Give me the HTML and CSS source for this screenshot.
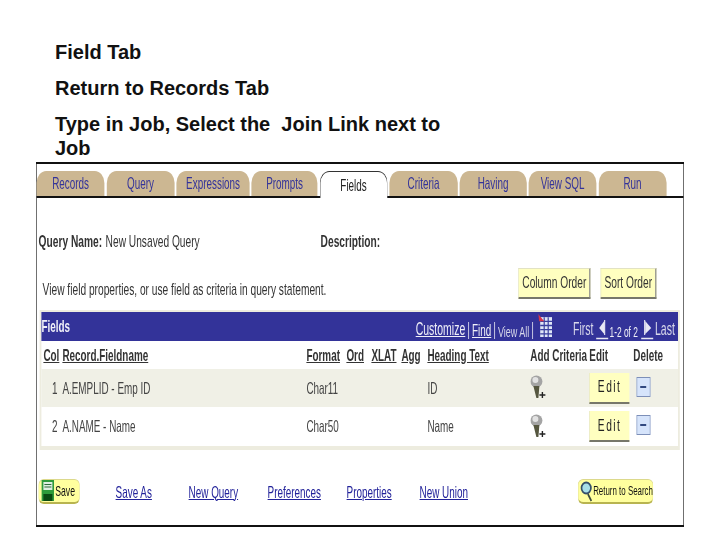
FILE: index.html
```html
<!DOCTYPE html>
<html lang="en">
<head>
<meta charset="utf-8">
<title>Field Tab</title>
<link rel="stylesheet" href="styles.css">
</head>
<body>
<main class="slide">
  <section class="notes">
    <p>Field Tab</p>
    <p>Return to Records Tab</p>
    <p>Type in Job, Select the &nbsp;Join Link next to<br>Job</p>
  </section>
  <section class="frame">
    <nav class="tabs">
      <a class="tab">Records</a>
      <a class="tab">Query</a>
      <a class="tab tab-wide">Expressions</a>
      <a class="tab tab-slim">Prompts</a>
      <a class="tab active">Fields</a>
      <a class="tab">Criteria</a>
      <a class="tab tab-mid">Having</a>
      <a class="tab">View SQL</a>
      <a class="tab">Run</a>
    </nav>
    <div class="query-row">
      <span class="label label-name">Query Name:</span>
      <span class="query-value">New Unsaved Query</span>
      <span class="label">Description:</span>
    </div>
    <div class="hint-row">
      <span class="hint">View field properties, or use field as criteria in query statement.</span>
      <button class="order-btn column-order">Column Order</button>
      <button class="order-btn sort-order">Sort Order</button>
    </div>
    <div class="grid-box">
      <div class="grid-title">
        <span class="grid-name">Fields</span>
        <span class="grid-tools">
          <a class="tool-link customize">Customize</a><span class="sep">|</span><a class="tool-link find">Find</a><span class="sep">|</span><span class="tool-plain">View All</span><span class="sep">|</span>
          <svg class="grid-icon" viewBox="0 0 14 22" preserveAspectRatio="none"><rect x="2" y="3" width="12" height="19" fill="#dfe6f7"/><path d="M2 7h12M2 11h12M2 15h12M2 19h12M6 3v19M10 3v19" stroke="#3a3f9e" stroke-width="1.2"/><path d="M0 0l6 7H1z" fill="#d8344a"/></svg>
          <span class="first">First</span>
          <svg class="nav-icon" viewBox="0 0 14 21" preserveAspectRatio="none"><path d="M9 2v13L4 9z" fill="#e8e8f4"/><path d="M9.500 1v15" stroke="#fff"/><path d="M1 19.500h12" stroke="#e8e8f4" stroke-width="1.500"/></svg>
          <span class="count">1-2 of 2</span>
          <svg class="nav-icon" viewBox="0 0 14 21" preserveAspectRatio="none"><path d="M5 2v13l6-6z" fill="#e8e8f4"/><path d="M4.500 1v15" stroke="#fff"/><path d="M1 19.500h12" stroke="#e8e8f4" stroke-width="1.500"/></svg>
          <span class="last">Last</span>
        </span>
      </div>
      <div class="row head">
        <span><u>Col</u></span><span><u>Record.Fieldname</u></span><span><u>Format</u></span><span><u>Ord</u></span><span><u>XLAT</u></span><span><u>Agg</u></span><span><u>Heading Text</u></span><span>Add Criteria</span><span>Edit</span><span>Delete</span>
      </div>
      <div class="row data shade">
        <span class="num">1</span><span>A.EMPLID - Emp ID</span><span>Char11</span><span></span><span></span><span></span><span>ID</span>
        <span><svg class="key" viewBox="0 0 16 24" preserveAspectRatio="none"><ellipse cx="6" cy="6.500" rx="6" ry="6" fill="#a4a4a4"/><circle cx="5" cy="5" r="3" fill="#e2e2e2"/><path d="M3 11h6l-1 12H6z" fill="#55563f"/><path d="M9 20h6M12 17v6" stroke="#222" stroke-width="1.400"/></svg></span>
        <span><button class="edit-btn">Edit</button></span>
        <span><span class="del"><i></i></span></span>
      </div>
      <div class="row data tall">
        <span class="num">2</span><span>A.NAME - Name</span><span>Char50</span><span></span><span></span><span></span><span>Name</span>
        <span><svg class="key" viewBox="0 0 16 24" preserveAspectRatio="none"><ellipse cx="6" cy="6.500" rx="6" ry="6" fill="#a4a4a4"/><circle cx="5" cy="5" r="3" fill="#e2e2e2"/><path d="M3 11h6l-1 12H6z" fill="#55563f"/><path d="M9 20h6M12 17v6" stroke="#222" stroke-width="1.400"/></svg></span>
        <span><button class="edit-btn">Edit</button></span>
        <span><span class="del"><i></i></span></span>
      </div>
    </div>
    <footer class="actions">
      <button class="pill save">
        <svg class="save-icon" viewBox="0 0 13 21" preserveAspectRatio="none"><rect width="13" height="21" fill="#2e9a3a"/><rect x="2" y="2" width="9" height="8" fill="#dfeee0"/><path d="M3 4.500h7M3 7h7" stroke="#2e6a3a"/><rect x="2" y="14" width="9" height="7" fill="#0a4a12"/></svg>
        <span>Save</span>
      </button>
      <a class="link save-as">Save As</a>
      <a class="link new-query">New Query</a>
      <a class="link prefs">Preferences</a>
      <a class="link props">Properties</a>
      <a class="link new-union">New Union</a>
      <button class="pill back">
        <svg class="search-icon" viewBox="0 0 14 22" preserveAspectRatio="none"><circle cx="7" cy="8" r="5.500" fill="#a8e0e8" stroke="#35506a" stroke-width="2"/><path d="M9 14l4 7" stroke="#3c4a3c" stroke-width="2"/></svg>
        <span class="back-label">Return to Search</span>
      </button>
    </footer>
  </section>
</main>
</body>
</html>
```
FILE: styles.css
```css
/* The captured panel is squeezed horizontally: it is laid out wide, then scaled by 0.6. --x converts on-screen px to layout px. */
:root { --x: 1.66667; }
* { box-sizing: border-box; }
html, body { margin: 0; padding: 0; background: #fff; }
.slide { width: 720px; height: 540px; padding: 40px 0 0 36px; overflow: hidden; }

.notes { padding-left: 19px; font: bold 20px/24px "Liberation Sans", Arial, sans-serif; color: #111; height: 122px; }
.notes p { margin: 0 0 12px; }

.frame {
  width: calc(648px * var(--x)); height: 365px;
  border: 2px solid #111;
  border-width: 2px calc(1px * var(--x)) 2px calc(1px * var(--x));
  display: flex; flex-direction: column;
  font-family: "Liberation Sans", Arial, sans-serif; font-size: 16.500px;
  color: #222; background: #fff;
  transform: scaleX(0.6); transform-origin: left top;
  filter: blur(0.3px);
}

.tabs { display: flex; gap: calc(2px * var(--x)); height: 27px; margin-top: 7px; border-bottom: 2px solid #111; }
.tab {
  width: calc(68px * var(--x)); height: 25px;
  display: flex; align-items: center; justify-content: center;
  background: #ccb792; color: #33339a;
  border-radius: 16px 16px 0 0 / 12px 12px 0 0;
}
.tab-wide { width: calc(73px * var(--x)); }
.tab-slim { width: calc(66px * var(--x)); }
.tab-mid { width: calc(67px * var(--x)); }
.tab.active { height: 27px; background: #fff; color: #222; border: 1px solid #333; border-bottom: 0; position: relative; z-index: 1; }

.query-row { display: flex; align-items: center; height: 22px; margin-top: 33px; padding-left: calc(2px * var(--x)); white-space: nowrap; font-size: 17px; }
.label { font-weight: bold; color: #333; }
.label-name { width: calc(67px * var(--x)); }
.query-value { width: calc(215px * var(--x)); color: #333; }

.hint-row { display: flex; align-items: center; height: 32px; margin-top: 14px; }
.hint { width: calc(482px * var(--x)); padding: 14px 0 0 calc(6px * var(--x)); font-size: 17px; color: #333; white-space: nowrap; }
.order-btn {
  height: 31px; padding: 0; background: #ffffc0; border: 1px solid #e2e2c4;
  border-right: 2px solid #888; border-bottom: 2px solid #77776a;
  font: 17px "Liberation Sans", Arial, sans-serif; color: #333; white-space: nowrap;
}
.column-order { width: calc(72px * var(--x)); }
.sort-order { width: calc(56px * var(--x)); margin-left: calc(10px * var(--x)); }

.grid-box {
  width: calc(640px * var(--x)); margin: 11px 0 0 calc(3px * var(--x));
  border: 2px solid #edecdf; border-width: 2px calc(2px * var(--x)) 4px calc(2px * var(--x));
}
.grid-title { height: 29px; background: #333399; color: #f0f0f8; display: flex; justify-content: space-between; align-items: flex-end; white-space: nowrap; }
.grid-name { font-weight: bold; align-self: center; }
.grid-tools { display: flex; align-items: flex-end; padding-right: calc(3px * var(--x)); font-size: 17.500px; }
.tool-link { text-decoration: underline; padding-bottom: 1px; }
.find { font-size: 16.500px; }
.tool-plain, .sep, .first, .last { padding-bottom: 1px; color: #d8d8ea; }
.sep { margin: 0 calc(2px * var(--x)); }
.tool-plain { font-size: 15px; }
.grid-icon { width: calc(14px * var(--x)); height: 23px; margin: -1px 0 4px calc(2px * var(--x)); align-self: flex-start; }
.first { margin-left: calc(21px * var(--x)); }
.nav-icon { width: calc(14px * var(--x)); height: 21px; margin: 0 0 1px calc(2px * var(--x)); }
.count { font-size: 14px; padding-bottom: 1px; }
.last { margin-left: calc(1px * var(--x)); }

.row {
  display: grid; align-items: center;
  grid-template-columns: calc(21px * var(--x)) calc(244px * var(--x)) calc(40px * var(--x)) calc(25px * var(--x)) calc(30px * var(--x)) calc(26px * var(--x)) calc(103px * var(--x)) calc(59px * var(--x)) calc(44px * var(--x)) calc(45px * var(--x));
}
.row > span { white-space: nowrap; }
.head { height: 28px; font-weight: bold; color: #333; }
.head > span:first-child { padding-left: calc(2px * var(--x)); }
.data { height: 38px; color: #444; }
.tall { height: 39px; }
.shade { background: #f0f0e6; }
.num { text-align: right; padding-right: calc(5px * var(--x)); }
.key { display: block; width: calc(16px * var(--x)); height: 24px; margin-top: -2px; }
.edit-btn {
  display: block; width: calc(40px * var(--x)); height: 31px; padding: 0;
  background: #ffffc0; border: 0; border-left: 1px solid #e2e2c4; border-bottom: 2px solid #77776a;
  font: 17px "Liberation Sans", Arial, sans-serif; letter-spacing: 2.500px; color: #222;
}
.del {
  display: flex; align-items: center; justify-content: center;
  width: calc(14px * var(--x)); height: 20px; margin: 0 0 3px calc(3px * var(--x));
  background: #d6e4fb; border: 1px solid #7d8fb8;
}
.del i { display: block; width: calc(6px * var(--x)); height: 2px; background: #334a80; }

.actions { display: flex; align-items: center; height: 26px; margin-top: 28px; padding-left: calc(2px * var(--x)); white-space: nowrap; }
.link { color: #22229a; text-decoration: underline; padding-top: 2px; }
.pill {
  display: flex; align-items: center; gap: calc(1px * var(--x)); height: 25px; padding: 1px calc(2px * var(--x));
  background: #ffff9e; border: 1px solid #dcd98c; border-bottom: 2px solid #b8b450; border-radius: 9px / 6px;
  font: 14.500px "Liberation Sans", Arial, sans-serif; color: #111; white-space: nowrap;
}
.save-icon { width: calc(13px * var(--x)); height: 21px; flex: none; }
.search-icon { width: calc(12px * var(--x)); height: 22px; flex: none; }
.back-label { font-size: 13.200px; }
.save { width: calc(41px * var(--x)); }
.save-as { margin-left: calc(36px * var(--x)); width: calc(73px * var(--x)); }
.new-query { width: calc(79px * var(--x)); }
.prefs { width: calc(79px * var(--x)); }
.props { width: calc(73px * var(--x)); }
.new-union { width: calc(158px * var(--x)); }
.back { width: calc(76px * var(--x)); }
```
